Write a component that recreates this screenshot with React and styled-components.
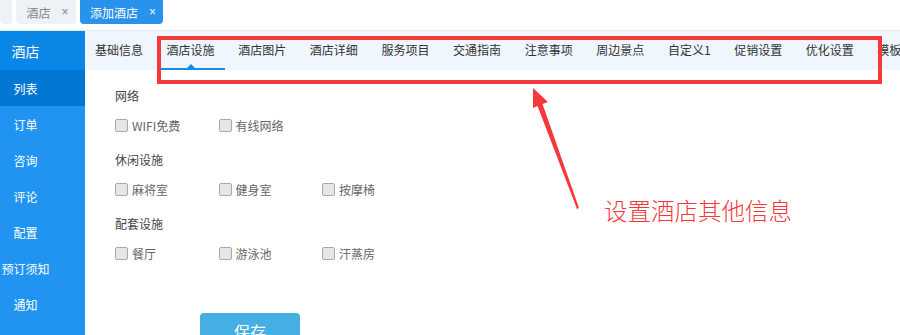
import React from "react";
import styled, { createGlobalStyle } from "styled-components";

const GlobalStyle = createGlobalStyle`
  html, body {
    margin: 0;
    padding: 0;
    background: #ffffff;
    font-family: "Noto Sans CJK SC", "Liberation Sans", sans-serif;
    overflow: hidden;
  }
`;

const sideItems = ["订单", "咨询", "评论", "配置", "预订须知", "通知"];
const navTabs = [
  "基础信息",
  "酒店设施",
  "酒店图片",
  "酒店详细",
  "服务项目",
  "交通指南",
  "注意事项",
  "周边景点",
  "自定义1",
  "促销设置",
  "优化设置",
  "模板",
];
const sections = [
  { title: "网络", items: ["WIFI免费", "有线网络"] },
  { title: "休闲设施", items: ["麻将室", "健身室", "按摩椅"] },
  { title: "配套设施", items: ["餐厅", "游泳池", "汗蒸房"] },
];

const App = () => {
  return (
    <>
      <GlobalStyle />
      <Page>
        <TopBar>
          <PageTab $partial />
          <PageTab>
            酒店<Close>×</Close>
          </PageTab>
          <PageTab $active>
            添加酒店<Close>×</Close>
          </PageTab>
        </TopBar>
        <Main>
          <Sidebar>
            <SideHead>
              <SideText>酒店</SideText>
            </SideHead>
            <SideItem $active>
              <SideText>列表</SideText>
            </SideItem>
            {sideItems.map((s) => (
              <SideItem key={s}>
                <SideText>{s}</SideText>
              </SideItem>
            ))}
          </Sidebar>
          <Content>
            <TabNav>
              {navTabs.map((t, i) => (
                <NavTab key={t} $active={i === 1}>
                  {t}
                </NavTab>
              ))}
            </TabNav>
            <Form>
              {sections.map((sec) => (
                <Section key={sec.title}>
                  <SectionTitle>{sec.title}</SectionTitle>
                  <CheckRow>
                    {sec.items.map((it) => (
                      <CheckItem key={it}>
                        <Box type="checkbox" />
                        {it}
                      </CheckItem>
                    ))}
                  </CheckRow>
                </Section>
              ))}
              <SaveButton>保存</SaveButton>
            </Form>
          </Content>
        </Main>
        <Highlight />
        <Arrow width="900" height="335" viewBox="0 0 900 335">
          <polygon
            points="533,88 548,102 542.5,104 579,208 577,209 537.5,106 533,108"
            fill="#f5383b"
          />
        </Arrow>
        <Note>设置酒店其他信息</Note>
      </Page>
    </>
  );
};

export default App;

const Page = styled.div`
  position: relative;
  width: 900px;
  height: 335px;
  overflow: hidden;
  display: flex;
  flex-direction: column;
`;

const TopBar = styled.div`
  flex-shrink: 0;
  height: 30px;
  display: flex;
  align-items: flex-start;
  gap: 4px;
  background: #ffffff;
`;

const PageTab = styled.div`
  flex-shrink: 0;
  height: 24px;
  box-sizing: border-box;
  width: ${(p) => (p.$partial ? "12px" : "auto")};
  padding: ${(p) => (p.$partial ? "0" : "0 7px 0 10.5px")};
  display: flex;
  align-items: center;
  border-radius: 0 0 4px 4px;
  background: ${(p) => (p.$active ? "#2992ea" : "#eef1f6")};
  color: ${(p) => (p.$active ? "#ffffff" : "#888888")};
  font-size: 12px;
`;

const Close = styled.span`
  margin-left: 11px;
  font-size: 12px;
  font-family: "Liberation Sans", sans-serif;
`;

const Main = styled.div`
  flex: 1;
  min-height: 0;
  display: flex;
  border-top: 1px solid #e4ebf3;
`;

const Sidebar = styled.div`
  flex-shrink: 0;
  width: 85px;
  background: #2194f1;
  display: flex;
  flex-direction: column;
`;

const SideHead = styled.div`
  flex-shrink: 0;
  height: 39px;
  background: #0a86e6;
  display: flex;
  align-items: center;
  font-size: 14px;
  color: #ffffff;
`;

const SideItem = styled.div`
  flex-shrink: 0;
  height: 36px;
  display: flex;
  align-items: center;
  background: ${(p) => (p.$active ? "#0278d4" : "transparent")};
  color: #ffffff;
  font-size: 12px;
`;

const SideText = styled.span`
  width: 51px;
  display: flex;
  justify-content: center;
  white-space: nowrap;
`;

const Content = styled.div`
  flex: 1;
  min-width: 0;
  overflow: hidden;
  display: flex;
  flex-direction: column;
`;

const TabNav = styled.div`
  flex-shrink: 0;
  height: 39px;
  background: #eff6fd;
  display: flex;
  align-items: stretch;
  white-space: nowrap;
  overflow: hidden;
`;

const NavTab = styled.div`
  position: relative;
  flex-shrink: 0;
  padding: 0 10px;
  margin-right: 3.6px;
  display: flex;
  align-items: center;
  font-size: 12px;
  color: #333333;
  border-bottom: 2px solid ${(p) => (p.$active ? "#1a8ae6" : "transparent")};
  box-sizing: border-box;
  &::after {
    content: "";
    display: ${(p) => (p.$active ? "block" : "none")};
    position: absolute;
    left: 50%;
    bottom: 0;
    margin-left: -4px;
    border-left: 4px solid transparent;
    border-right: 4px solid transparent;
    border-bottom: 4px solid #1a8ae6;
  }
`;

const Form = styled.div`
  padding: 16px 0 0 30px;
  display: flex;
  flex-direction: column;
`;

const Section = styled.div`
  display: flex;
  flex-direction: column;
  gap: 9px;
  margin-bottom: 15px;
`;

const SectionTitle = styled.div`
  height: 20px;
  line-height: 20px;
  font-size: 12px;
  color: #444444;
`;

const CheckRow = styled.div`
  display: flex;
  height: 20px;
  align-items: center;
`;

const CheckItem = styled.label`
  flex-shrink: 0;
  width: 103.5px;
  display: flex;
  align-items: center;
  gap: 4px;
  font-size: 12px;
  color: #666666;
`;

const Box = styled.input`
  appearance: none;
  flex-shrink: 0;
  margin: 0;
  width: 13px;
  height: 13px;
  box-sizing: border-box;
  border: 1px solid #a9a9a9;
  border-radius: 2px;
  background: #e6e6e6;
`;

const SaveButton = styled.button`
  flex-shrink: 0;
  margin: 35px 0 0 85px;
  width: 100px;
  height: 36px;
  border: none;
  border-radius: 4px;
  background: #45aee3;
  color: #ffffff;
  font-size: 16px;
  font-family: "Noto Sans CJK SC", sans-serif;
  padding: 0;
`;

const Highlight = styled.div`
  position: absolute;
  left: 157px;
  top: 36px;
  width: 725px;
  height: 48px;
  box-sizing: border-box;
  border: 4px solid #f5383b;
  pointer-events: none;
`;

const Arrow = styled.svg`
  position: absolute;
  left: 0;
  top: 0;
  pointer-events: none;
`;

const Note = styled.div`
  position: absolute;
  left: 604px;
  top: 195px;
  font-size: 23.5px;
  line-height: 30px;
  color: #f5383b;
  font-family: "Noto Sans CJK SC", sans-serif;
  font-weight: 300;
`;
